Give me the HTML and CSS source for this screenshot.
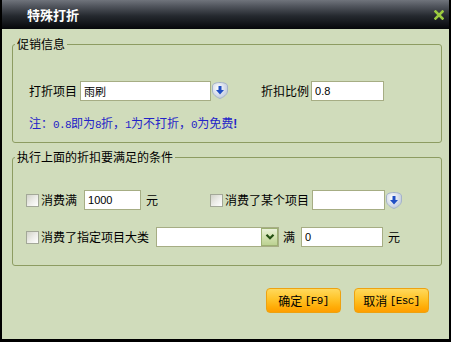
FILE: index.html
```html
<!DOCTYPE html>
<html lang="zh-CN">
<head>
<meta charset="utf-8">
<title>特殊打折</title>
<link rel="stylesheet" href="styles.css">
</head>
<body>
<div class="window">
  <div class="titlebar">
    <span class="title">特殊打折</span>
    <svg class="close" width="10" height="10" viewBox="0 0 10 10"><path d="M1.5 1.5 L8.5 8.5 M8.5 1.5 L1.5 8.5" stroke="#9ccb3f" stroke-width="2.6" stroke-linecap="square"/></svg>
  </div>
  <div class="content">
    <fieldset class="group g1">
      <legend>促销信息</legend>
      <div class="row r1">
        <span class="lbl">打折项目</span>
        <input class="txt in-item" value="雨刷">
        <span class="pick"><svg width="16" height="17" viewBox="0 0 16 17"><defs><radialGradient id="pg1" cx="0.4" cy="0.35" r="0.75"><stop offset="0" stop-color="#ffffff"/><stop offset="1" stop-color="#b6c2d8"/></radialGradient></defs><path d="M8 0.5 C11.5 0.5 15.5 1.5 15.5 4 L15.5 9 C15.5 12.5 11 15.5 8 16.5 C5 15.5 0.5 12.5 0.5 9 L0.5 4 C0.5 1.5 4.5 0.5 8 0.5 Z" fill="url(#pg1)" stroke="#a5b3c9"/><path d="M6.5 4 H9.5 V8 H12 L8 12.5 L4 8 H6.5 Z" fill="#1f4ec4"/></svg></span>
        <span class="lbl lbl-ratio">折扣比例</span>
        <input class="txt in-ratio" value="0.8">
      </div>
      <div class="note">注：<span class="mono">0.8</span>即为<span class="mono">8</span>折，<span class="mono">1</span>为不打折，<span class="mono">0</span>为免费<b>!</b></div>
    </fieldset>
    <fieldset class="group g2">
      <legend>执行上面的折扣要满足的条件</legend>
      <div class="row r2a">
        <input type="checkbox" class="cb">
        <span class="lbl cb-lbl">消费满</span>
        <input class="txt in-min" value="1000">
        <span class="lbl unit">元</span>
        <input type="checkbox" class="cb cb-2">
        <span class="lbl cb-lbl">消费了某个项目</span>
        <input class="txt in-some" value="">
        <span class="pick"><svg width="16" height="17" viewBox="0 0 16 17"><defs><radialGradient id="pg2" cx="0.4" cy="0.35" r="0.75"><stop offset="0" stop-color="#ffffff"/><stop offset="1" stop-color="#b6c2d8"/></radialGradient></defs><path d="M8 0.5 C11.5 0.5 15.5 1.5 15.5 4 L15.5 9 C15.5 12.5 11 15.5 8 16.5 C5 15.5 0.5 12.5 0.5 9 L0.5 4 C0.5 1.5 4.5 0.5 8 0.5 Z" fill="url(#pg2)" stroke="#a5b3c9"/><path d="M6.5 4 H9.5 V8 H12 L8 12.5 L4 8 H6.5 Z" fill="#1f4ec4"/></svg></span>
      </div>
      <div class="row r2b">
        <input type="checkbox" class="cb">
        <span class="lbl cb-lbl">消费了指定项目大类</span>
        <div class="select"><span class="drop"><svg width="10" height="8" viewBox="0 0 10 8"><path d="M1.5 1.8 L5 5.3 L8.5 1.8" stroke="#234f12" stroke-width="2.2" fill="none"/></svg></span></div>
        <span class="lbl full">满</span>
        <input class="txt in-full" value="0">
        <span class="lbl unit">元</span>
      </div>
    </fieldset>
    <div class="actions">
      <button class="btn">确定 <span class="key">[F9]</span></button>
      <button class="btn">取消 <span class="key">[Esc]</span></button>
    </div>
  </div>
</div>
</body>
</html>
```
FILE: styles.css
```css
html, body {
  margin: 0;
  padding: 0;
  background: #000;
}

.window {
  width: 451px;
  height: 342px;
  box-sizing: border-box;
  background: #000;
  padding: 0 2px 3px 2px;
  display: flex;
  flex-direction: column;
  font-family: "Noto Sans CJK SC", "Noto Sans", sans-serif;
  font-size: 12px;
  color: #000;
}

.titlebar {
  flex: none;
  height: 29px;
  display: flex;
  align-items: center;
  justify-content: space-between;
  padding: 0 5px 0 25px;
  background: linear-gradient(to bottom, #70747c 0%, #50545c 22%, #25292f 55%, #06070a 100%);
}

.title {
  color: #fff;
  font-weight: bold;
  font-size: 13px;
  line-height: 16px;
}

.close {
  display: block;
}

.content {
  flex: 1;
  background: #d0dcbb;
  padding: 8px 7px 0 10px;
}

.group {
  margin: 0;
  padding: 0;
  border: 1px solid #8d9c62;
  border-radius: 3px;
  min-inline-size: 0;
}

.group legend {
  margin-left: 2px;
  padding: 0 2px;
  font-size: 12px;
  line-height: 14px;
}

.g1 {
  padding-bottom: 10px;
}

.g2 {
  margin-top: 7px;
  padding-bottom: 18px;
}

.row {
  display: flex;
  align-items: center;
}

.lbl {
  line-height: 14px;
  white-space: nowrap;
}

.r1 {
  margin-top: 29px;
  height: 21px;
  padding-left: 16px;
}

.note {
  padding-left: 16px;
  margin-top: 15px;
  line-height: 14px;
  color: #2323c8;
  white-space: nowrap;
}

.note .mono {
  font-family: "Liberation Mono", monospace;
  font-size: 11px;
  letter-spacing: -0.6px;
}

.note b {
  font-family: "Liberation Sans", sans-serif;
  font-weight: bold;
}

.txt {
  box-sizing: border-box;
  height: 20px;
  margin: 0;
  border: 1px solid #a6ad84;
  border-radius: 0;
  padding: 0 3px;
  background: #fff;
  font-family: "Liberation Sans", "Noto Sans CJK SC", sans-serif;
  font-size: 11px;
  color: #000;
  outline: none;
}

.in-item {
  width: 131px;
  margin-left: 3px;
}

.pick {
  display: flex;
  margin-left: 1px;
}

.lbl-ratio {
  margin-left: 33px;
}

.in-ratio {
  width: 73px;
  margin-left: 2px;
}

.r2a {
  margin-top: 26px;
  height: 20px;
  padding-left: 13px;
}

.r2b {
  margin-top: 17px;
  height: 20px;
  padding-left: 13px;
}

.cb {
  appearance: none;
  -webkit-appearance: none;
  box-sizing: border-box;
  width: 13px;
  height: 13px;
  margin: 0;
  border: 1px solid #a3a898;
  background: linear-gradient(135deg, #d2d3c9 0%, #eeeeea 55%, #ffffff 100%);
}

.cb-lbl {
  margin-left: 2px;
}

.cb-2 {
  margin-left: 52px;
}

.in-min {
  width: 57px;
  margin-left: 7px;
}

.unit {
  margin-left: 5px;
}

.in-some {
  width: 73px;
  margin-left: 3px;
}

.select {
  box-sizing: border-box;
  width: 123px;
  height: 20px;
  margin-left: 7px;
  border: 1px solid #a6ad84;
  background: #fff;
  display: flex;
  justify-content: flex-end;
}

.drop {
  box-sizing: border-box;
  width: 17px;
  height: 18px;
  border: 1px solid #9db073;
  background: linear-gradient(to bottom, #e9f1d9 0%, #d2e2b0 50%, #bcd292 100%);
  display: flex;
  align-items: center;
  justify-content: center;
}

.full {
  margin-left: 4px;
}

.in-full {
  width: 82px;
  margin-left: 6px;
}

.actions {
  display: flex;
  justify-content: flex-end;
  gap: 13px;
  margin-top: 22px;
  padding-right: 13px;
}

.btn {
  box-sizing: border-box;
  width: 75px;
  height: 25px;
  margin: 0;
  padding: 0;
  border: 1px solid #eda211;
  border-radius: 4px;
  background: linear-gradient(to bottom, #ffd95c 0%, #ffc327 45%, #ffab06 80%, #ff9e00 100%);
  font-family: "Noto Sans CJK SC", sans-serif;
  font-size: 12px;
  color: #000;
  line-height: 14px;
  display: flex;
  align-items: center;
  justify-content: center;
  white-space: pre;
}

.key {
  font-family: "Liberation Mono", monospace;
  font-size: 11px;
  letter-spacing: -0.6px;
}
```
